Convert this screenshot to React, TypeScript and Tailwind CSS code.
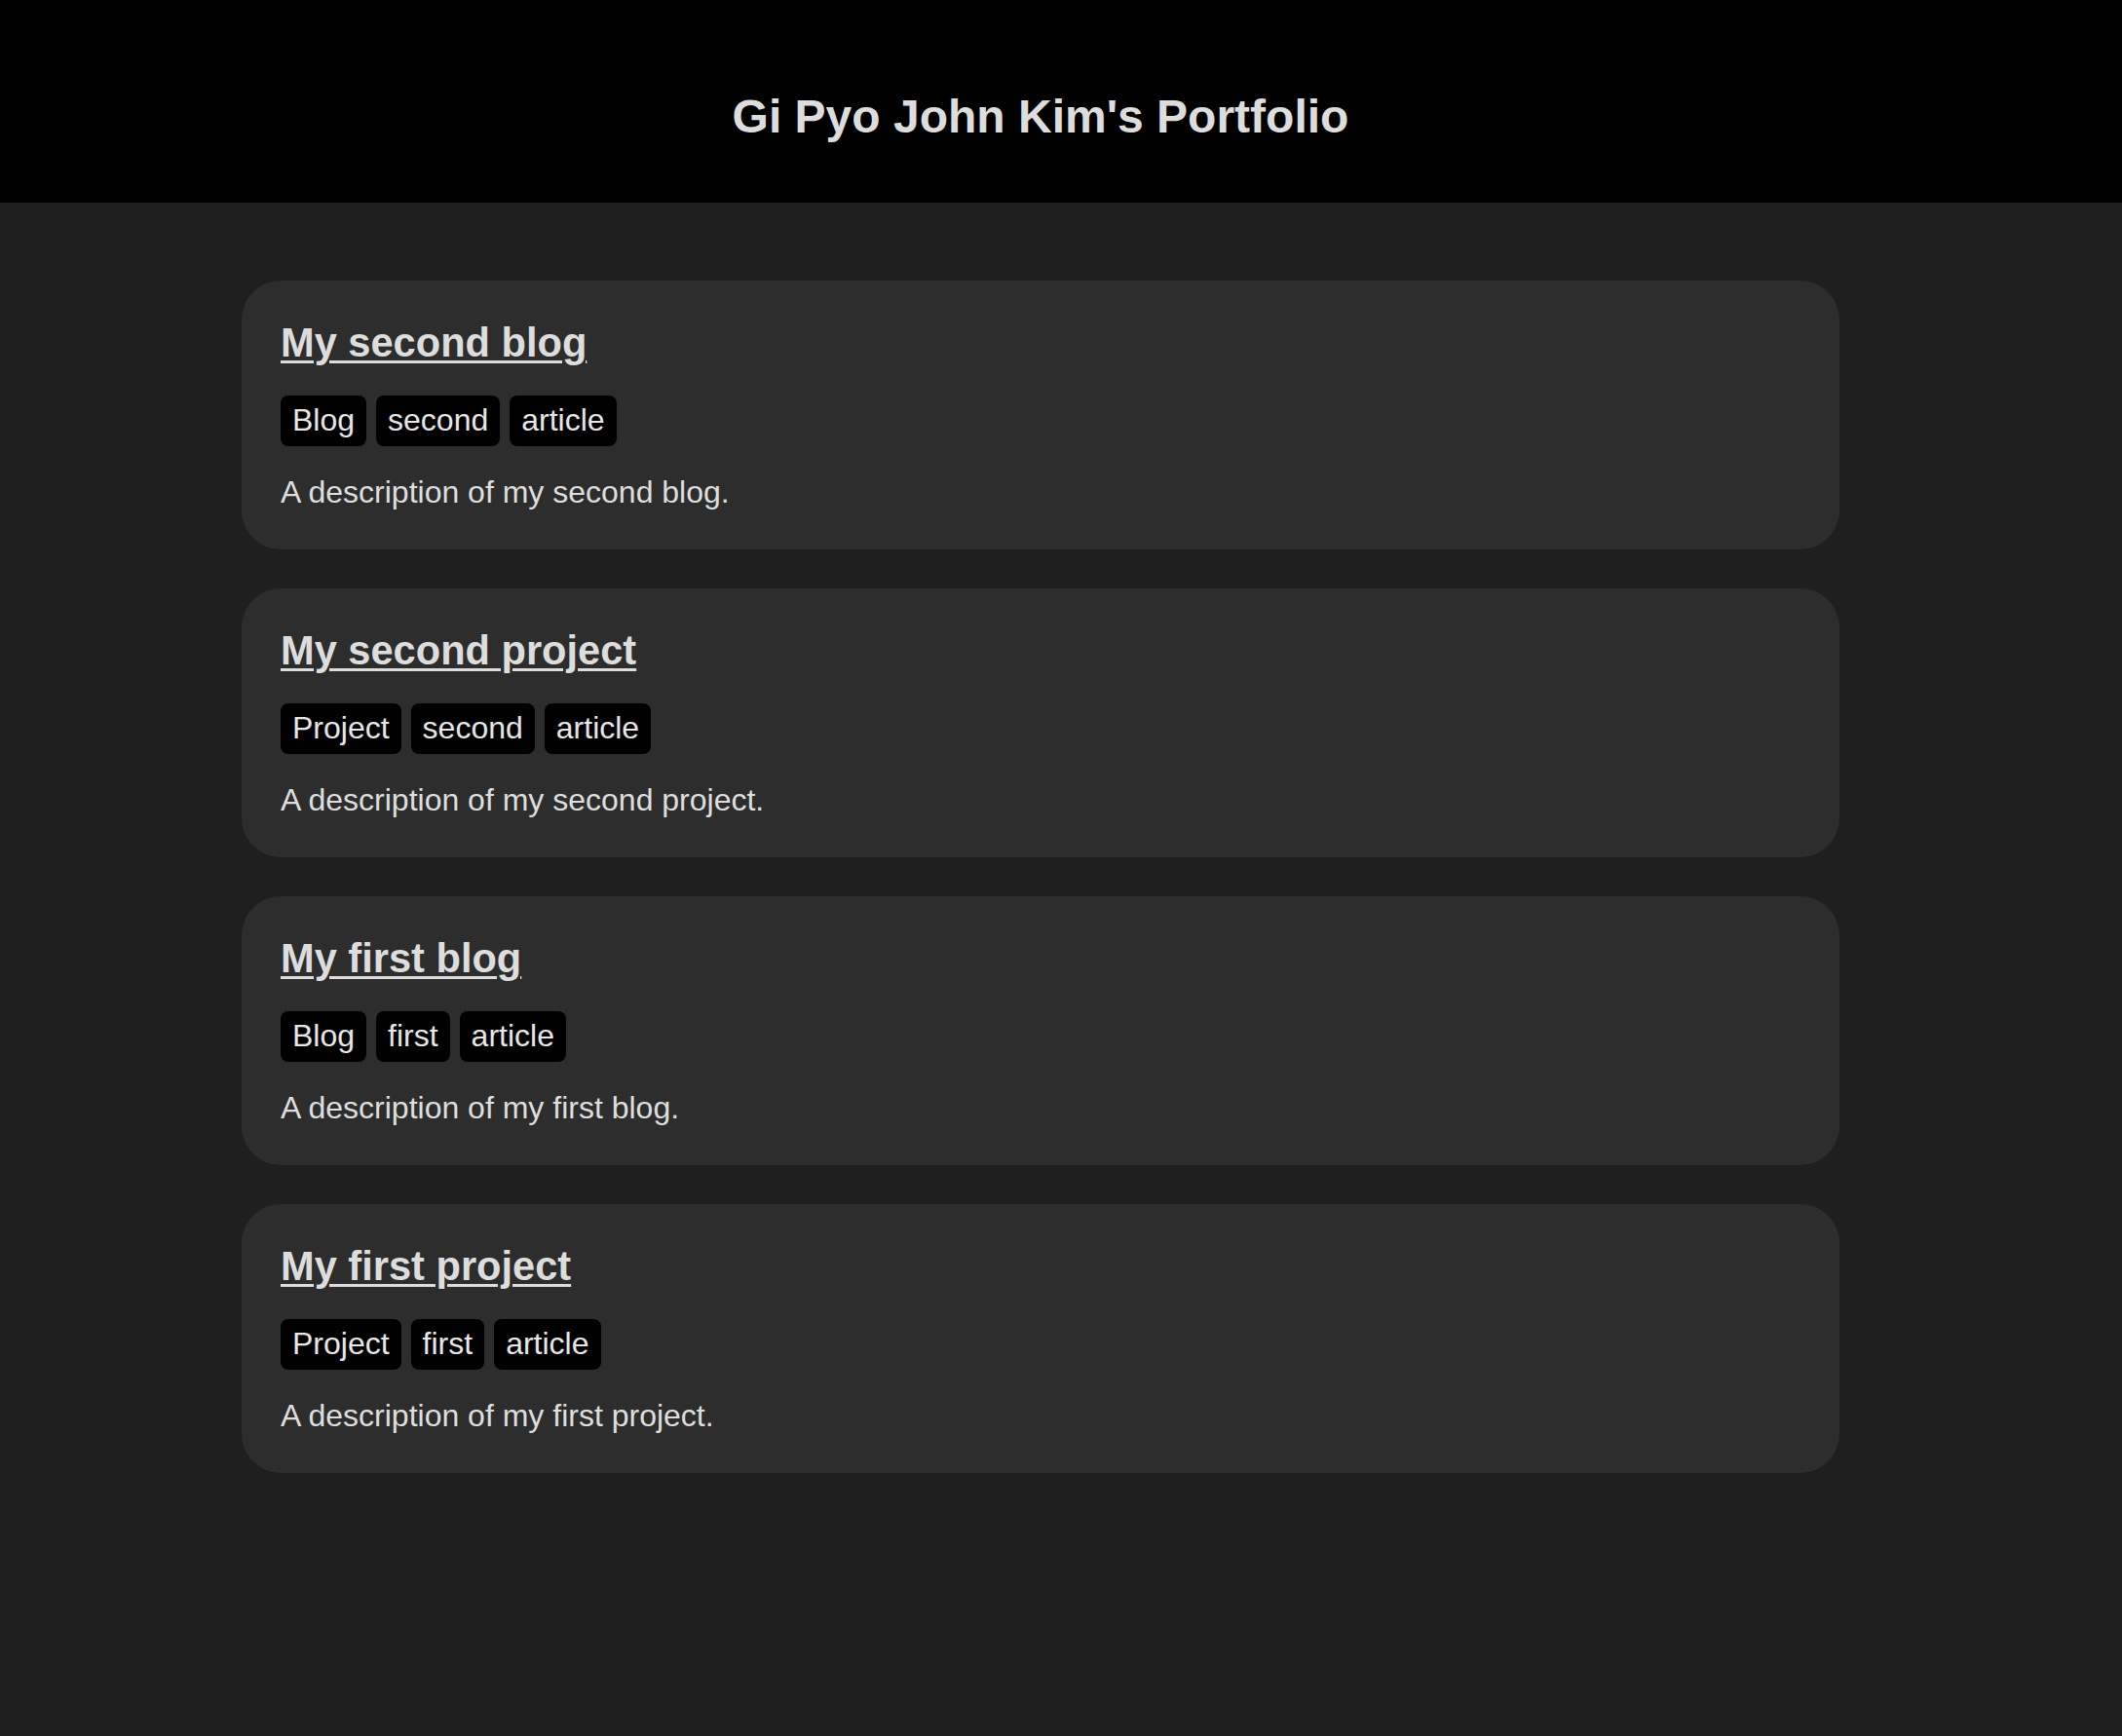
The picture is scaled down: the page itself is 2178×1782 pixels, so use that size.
import React from "react";

const items = [
  { title: "My second blog", tags: ["Blog", "second", "article"], desc: "A description of my second blog." },
  { title: "My second project", tags: ["Project", "second", "article"], desc: "A description of my second project." },
  { title: "My first blog", tags: ["Blog", "first", "article"], desc: "A description of my first blog." },
  { title: "My first project", tags: ["Project", "first", "article"], desc: "A description of my first project." },
];

export default function App() {
  return (
    <div
      className="min-h-[1782px] bg-[#1f1f1f] text-[#dddddd]"
      style={{ fontFamily: '"Liberation Sans", Arial, Helvetica, sans-serif' }}
    >
      <header className="h-[208px] bg-black pt-[92px] pr-[42px] text-center">
        <h1 className="text-[48px] leading-[55px] font-bold text-[#dddddd]">Gi Pyo John Kim's Portfolio</h1>
      </header>
      <main className="flex flex-col gap-[40px] pt-[80px] pl-[248px]">
        {items.map((it) => (
          <article key={it.title} className="w-[1640px] rounded-[40px] bg-[#2d2d2d] p-[40px]">
            <h2 className="text-[41.6px] leading-[48px] font-bold">
              <a href="#" className="text-[#dddddd] underline decoration-[3px] underline-offset-[4px]">
                {it.title}
              </a>
            </h2>
            <div className="mt-[30px] flex gap-[10px]">
              {it.tags.map((t) => (
                <span key={t} className="h-[52px] rounded-lg bg-black px-[12px] pt-[7px] pb-[9px] text-[32px] leading-[36px] text-[#e6e6e6]">
                  {t}
                </span>
              ))}
            </div>
            <p className="mt-[28px] text-[32px] leading-[38px] text-[#dedede]">{it.desc}</p>
          </article>
        ))}
      </main>
    </div>
  );
}
